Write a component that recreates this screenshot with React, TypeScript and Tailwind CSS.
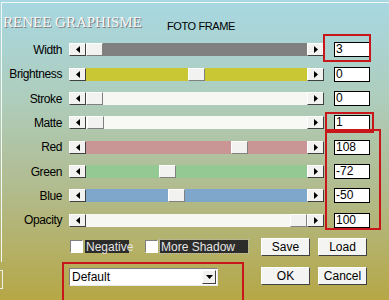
import React from 'react'

const rows = [
  { label: 'Width', track: 'bg-[#808080]', thumb: 0, value: '3' },
  { label: 'Brightness', track: 'bg-[#c9c733]', thumb: 102, value: '0' },
  { label: 'Stroke', track: 'bg-[#f6f6f2]', thumb: 0, value: '0' },
  { label: 'Matte', track: 'bg-[#f8f8f4]', thumb: 1, value: '1' },
  { label: 'Red', track: 'bg-[#c99595]', thumb: 145, value: '108' },
  { label: 'Green', track: 'bg-[#94c994]', thumb: 73, value: '-72' },
  { label: 'Blue', track: 'bg-[#7fa7cb]', thumb: 82, value: '-50' },
  { label: 'Opacity', track: 'bg-[#f6f6f2]', thumb: 204, value: '100' },
]

function ArrowBtn({ dir }: { dir: 'left' | 'right' }) {
  return (
    <div className="w-[17px] h-[13px] shrink-0 bg-[#f2f2f0] border border-t-white border-l-white border-r-[#404040] border-b-[#404040] flex items-center justify-center">
      <svg width="4" height="7" viewBox="0 0 4 7">
        <polygon points={dir === 'left' ? '4,0 4,7 0,3.5' : '0,0 0,7 4,3.5'} fill="#000" />
      </svg>
    </div>
  )
}

function Slider({ track, thumb }: { track: string; thumb: number }) {
  return (
    <div className="flex items-center">
      <ArrowBtn dir="left" />
      <div className={`relative w-[221px] h-[13px] ${track}`}>
        <div
          className="absolute top-0 w-[17px] h-[13px] bg-[#f2f2f0] border border-t-white border-l-white border-r-[#808080] border-b-[#808080]"
          style={{ left: thumb }}
        />
      </div>
      <ArrowBtn dir="right" />
    </div>
  )
}

function Check({ label, focus, width }: { label: string; focus?: boolean; width: string }) {
  return (
    <div className="flex items-center">
      <div className="w-[13px] h-[13px] bg-white border border-t-[#808080] border-l-[#808080] border-r-white border-b-white" />
      <span
        className={`ml-[2px] h-[13px] px-[1px] flex items-center bg-[#2c2c2a] text-[#e4e4e4] text-[12px] leading-none ${width} ${
          focus ? 'outline outline-1 outline-dotted outline-[#bbbbbb]' : ''
        }`}
      >
        {label}
      </span>
    </div>
  )
}

function Btn({ label }: { label: string }) {
  return (
    <div className="h-[18px] bg-[#f4f4f2] border border-t-white border-l-white border-r-[#404040] border-b-[#404040] flex items-center justify-center text-[12px] text-black">
      {label}
    </div>
  )
}

export default function App() {
  return (
    <div className="relative w-[389px] h-[300px] overflow-hidden font-['Liberation_Sans',Arial,sans-serif] bg-[linear-gradient(to_bottom,#a8d8e3_0%,#aecdbc_33%,#b1bd93_60%,#b6a746_100%)]">
      <div className="mt-[2px] ml-[1px] h-[260px] border-t border-l border-[#f4f8f4]">
        {/* header */}
        <div className="h-[34.8px] flex items-start">
          <div className="w-[165px] pl-[1px] mt-[10px] leading-[18px] text-[15px] font-['Liberation_Serif',serif] text-[#f6f6f6] [text-shadow:1px_1px_0_#7a7a7a] whitespace-nowrap">
            RENEE GRAPHISME
          </div>
          <div className="mt-[17px] text-[11px] leading-[13px] tracking-[-0.4px] text-black">FOTO FRAME</div>
        </div>

        {/* sliders */}
        <div className="flex flex-col">
          {rows.map((r) => (
            <div key={r.label} className="h-[24.33px] flex items-center">
              <div className="w-[60px] text-right text-[12px] tracking-[-0.4px] text-black">{r.label}</div>
              <div className="ml-[7px]">
                <Slider track={r.track} thumb={r.thumb} />
              </div>
              <div className="ml-[10px] w-[36px] h-[15px] bg-white border border-black text-[12px] leading-[13px] pl-[1px] text-black">
                {r.value}
              </div>
            </div>
          ))}
        </div>

        {/* bottom */}
        <div className="flex">
          <div className="ml-[67px] w-[192px] pt-[7.6px]">
            <div className="flex items-center">
              <div className="ml-[1px]">
                <Check label="Negative" width="w-[44px]" />
              </div>
              <div className="ml-[16px]">
                <Check label="More Shadow" width="w-[88px]" focus />
              </div>
            </div>
            <div className="mt-[15px] w-[149px] h-[18px] bg-white border border-t-[#808080] border-l-[#808080] border-r-[#e8e8e8] border-b-[#e8e8e8] flex items-center justify-between">
              <span className="pl-[2px] text-[12px] text-black">Default</span>
              <div className="mr-[1px] w-[14px] h-[14px] bg-[#f2f2f0] border border-t-white border-l-white border-r-[#404040] border-b-[#404040] flex items-center justify-center">
                <svg width="7" height="4" viewBox="0 0 7 4">
                  <polygon points="0,0 7,0 3.5,4" fill="#000" />
                </svg>
              </div>
            </div>
          </div>
          <div className="pt-[5.6px] grid grid-cols-[49px_49px] gap-x-[8px] gap-y-[9px]">
            <Btn label="Save" />
            <Btn label="Load" />
            <Btn label="OK" />
            <Btn label="Cancel" />
          </div>
        </div>
      </div>

      {/* left edge remnant */}
      <div className="absolute left-0 top-[270px] w-[3px] h-[19px] border-r border-t border-b border-[#eeeeee]" />

      {/* red annotations */}
      <div className="absolute left-[323px] top-[34px] w-[48px] h-[28px] border-2 border-[#c8161a]" />
      <div className="absolute left-[325px] top-[112px] w-[49px] h-[21px] border-2 border-[#c8161a]" />
      <div className="absolute left-[325px] top-[129px] w-[56px] h-[101px] border-2 border-[#c8161a]" />
      <div className="absolute left-[62px] top-[262px] w-[182px] h-[50px] border-2 border-[#c8161a]" />
    </div>
  )
}
